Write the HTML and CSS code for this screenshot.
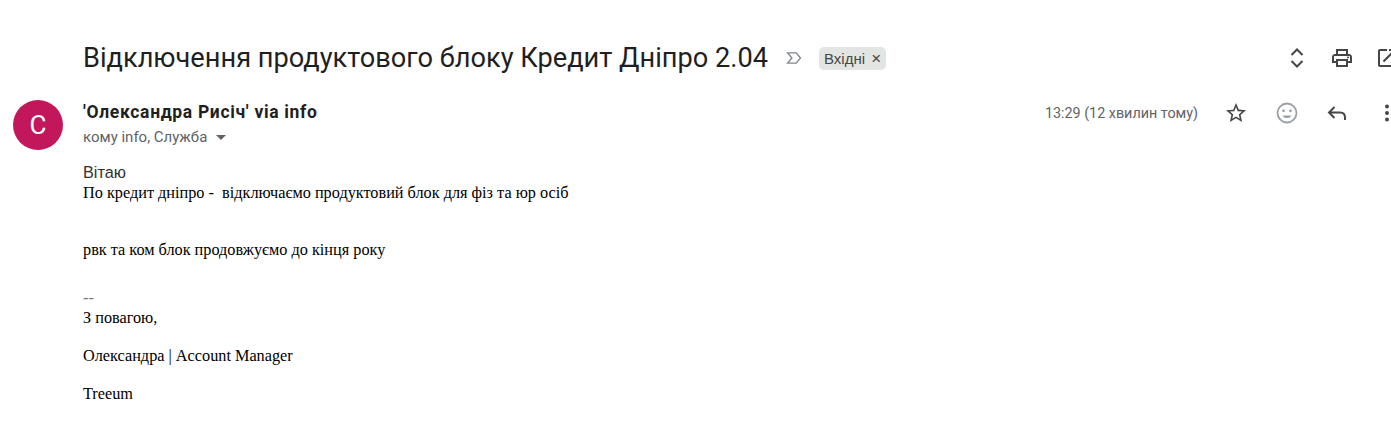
FILE: index.html
```html
<!DOCTYPE html>
<html lang="uk">
<head>
    <meta charset="UTF-8">
    <meta name="viewport" content="width=device-width, initial-scale=1.0">
    <title>Відключення продуктового блоку Кредит Дніпро 2.04</title>
    <link rel="stylesheet" href="styles.css">
</head>
<body>
    <main class="mail">
        <div class="subject-row">
            <h1 class="subject">Відключення продуктового блоку Кредит Дніпро 2.04</h1>
            <svg class="marker" viewBox="0 0 20 16" width="17" height="14"><path d="M2 2h10l5 6-5 6H2l5-6z" fill="none" stroke="#80868b" stroke-width="1.6"/></svg>
            <span class="label">Вхідні <span class="label-x">×</span></span>
            <div class="toolbar">
                <svg class="icon" viewBox="0 0 24 24"><path d="M6.5 9 12 3.5 17.5 9M6.5 15l5.5 5.5 5.500-5.500" fill="none" stroke="#444746" stroke-width="2"/></svg>
                <svg class="icon" viewBox="0 0 24 24"><path d="M19 8h-1V3H6v5H5c-1.660 0-3 1.340-3 3v6h4v4h12v-4h4v-6c0-1.660-1.340-3-3-3zM8 5h8v3H8V5zm8 12v2H8v-4h8v2zm2-2v-2H6v2H4v-4c0-.55.45-1 1-1h14c.55 0 1 .45 1 1v4h-2z" fill="#444746"/><circle cx="18" cy="11.500" r="1" fill="#444746"/></svg>
                <svg class="icon" viewBox="0 0 24 24"><path d="M19 19H5V5h7V3H5c-1.110 0-2 .9-2 2v14c0 1.100.89 2 2 2h14c1.100 0 2-.9 2-2v-7h-2v7zM14 3v2h3.590l-9.830 9.830 1.410 1.410L19 6.410V10h2V3h-7z" fill="#444746"/></svg>
            </div>
        </div>

        <div class="message">
            <div class="avatar">С</div>
            <div class="content">
                <div class="meta">
                    <div class="people">
                        <div class="sender">'Олександра Рисіч' via info</div>
                        <div class="recipients">кому info, Служба <span class="caret"></span></div>
                    </div>
                    <div class="actions">
                        <span class="time">13:29 (12 хвилин тому)</span>
                        <svg class="icon star" viewBox="0 0 24 24"><path d="M22 9.240l-7.190-.62L12 2 9.190 8.630 2 9.240l5.460 4.730L5.820 21 12 17.270 18.180 21l-1.630-7.030L22 9.240zM12 15.400l-3.760 2.270 1-4.280-3.320-2.880 4.380-.38L12 6.100l1.710 4.040 4.380.38-3.320 2.880 1 4.280L12 15.400z" fill="#444746"/></svg>
                        <svg class="icon" viewBox="0 0 24 24"><circle cx="12" cy="12" r="9.500" fill="none" stroke="#9aa0a6" stroke-width="1.800"/><circle cx="8.500" cy="9.800" r="1.400" fill="#9aa0a6"/><circle cx="15.500" cy="9.800" r="1.400" fill="#9aa0a6"/><path d="M7.500 14.500c1 1.700 2.600 2.600 4.500 2.600s3.500-.9 4.500-2.600z" fill="#9aa0a6"/></svg>
                        <svg class="icon" viewBox="0 0 24 24"><path d="M9.500 6 4 11.500 9.500 17M4 11.500h11c3 0 5 2 5 5V19" fill="none" stroke="#444746" stroke-width="2"/></svg>
                        <svg class="icon" viewBox="0 0 24 24"><circle cx="12" cy="5.500" r="2" fill="#444746"/><circle cx="12" cy="12" r="2" fill="#444746"/><circle cx="12" cy="18.500" r="2" fill="#444746"/></svg>
                    </div>
                </div>
                <div class="body">
                    <div class="greeting">Вітаю</div>
                    <p class="line">По кредит дніпро -&nbsp; відключаємо продуктовий блок для фіз та юр осіб</p>
                    <p class="line gap-lg">рвк та ком блок продовжуємо до кінця року</p>
                    <p class="line dashes">--</p>
                    <p class="line">З повагою,</p>
                    <p class="line gap-sm">Олександра | Account Manager</p>
                    <p class="line gap-sm">Treeum</p>
                </div>
            </div>
        </div>
    </main>
</body>
</html>
```

FILE: styles.css
```css
html, body {
    margin: 0;
    padding: 0;
    height: 100%;
    overflow: hidden;
    background-color: #fff;
}

.mail {
    width: 1420px;
    font-family: 'Roboto', 'Liberation Sans', sans-serif;
}

.subject-row {
    display: flex;
    align-items: center;
    height: 40px;
    padding: 38px 0 0 83px;
}

.subject {
    margin: 0;
    font-family: 'Roboto', sans-serif;
    font-size: 27.2px;
    font-weight: 400;
    color: #1f1f1f;
    white-space: nowrap;
}

.marker {
    margin-left: 18px;
}

.label {
    margin-left: 16px;
    padding: 0 5px;
    height: 23px;
    line-height: 23px;
    border-radius: 5px;
    background-color: #e3e5e3;
    color: #444746;
    font-family: 'Liberation Sans', sans-serif;
    font-size: 15px;
}

.label-x {
    margin-left: 2px;
    font-size: 17px;
}

.toolbar {
    display: flex;
    gap: 21px;
    margin-left: auto;
    padding-right: 21px;
}

.icon {
    width: 24px;
    height: 24px;
    flex-shrink: 0;
}

.star {
    margin-right: 1px;
}

.message {
    display: flex;
    margin-top: 22px;
    padding-left: 13px;
}

.avatar {
    width: 50px;
    height: 50px;
    flex-shrink: 0;
    border-radius: 50%;
    background-color: #c2185b;
    color: #fff;
    font-size: 26px;
    line-height: 50px;
    text-align: center;
}

.content {
    flex: 1;
    margin-left: 20px;
}

.meta {
    display: flex;
    justify-content: space-between;
    align-items: flex-start;
}

.sender {
    font-size: 17.5px;
    font-weight: 700;
    line-height: 24px;
    letter-spacing: 0.67px;
    color: #1f1f1f;
}

.recipients {
    margin-top: 3px;
    font-size: 15px;
    line-height: 20px;
    color: #5f6368;
}

.caret {
    display: inline-block;
    margin-left: 5px;
    vertical-align: 2px;
    border-left: 5px solid transparent;
    border-right: 5px solid transparent;
    border-top: 5px solid #5f6368;
}

.actions {
    display: flex;
    align-items: center;
    gap: 26px;
    height: 24px;
    padding: 1px 21px 0 0;
}

.time {
    font-size: 14.35px;
    color: #5f6368;
}

.body {
    margin-top: 16px;
}

.greeting {
    font-family: 'Liberation Sans', sans-serif;
    font-size: 16.25px;
    line-height: 19px;
    color: #333;
}

.line {
    margin: 2px 0 0;
    font-family: 'Liberation Serif', serif;
    font-size: 16.25px;
    line-height: 18px;
    color: #000;
}

.gap-sm {
    margin-top: 20px;
}

.gap-lg {
    margin-top: 39px;
}

.dashes {
    margin-top: 30px;
    color: #777;
}
```
